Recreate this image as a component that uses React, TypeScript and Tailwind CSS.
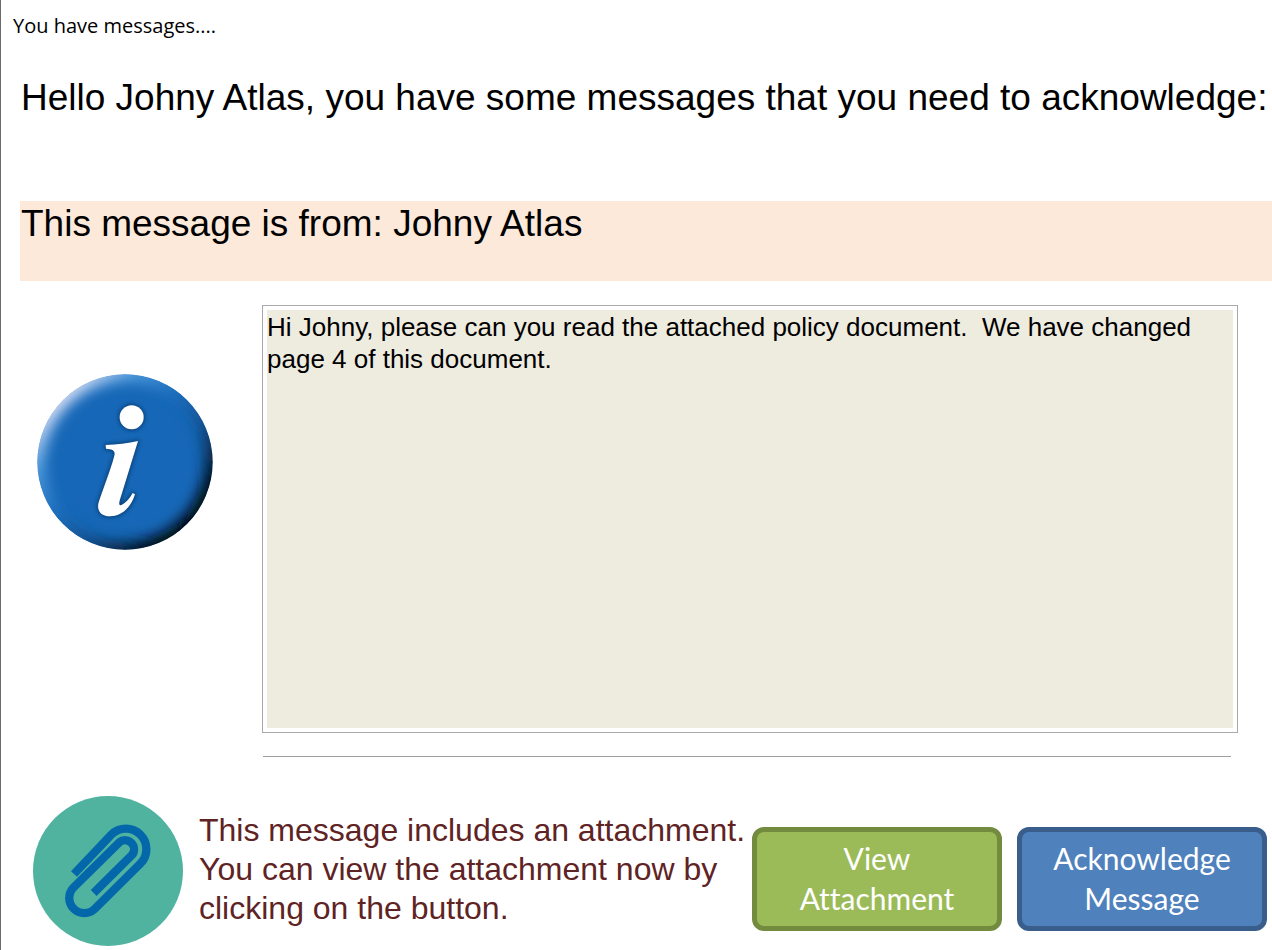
import React from 'react';

const InfoIcon: React.FC = () => (
  <svg viewBox="51 41 528 528" className="size-44 shrink-0" role="img" aria-label="Information">
    <defs>
      <clipPath id="disc">
        <circle cx="315" cy="305" r="263" />
      </clipPath>
      <linearGradient id="bevel" x1="0.12" y1="0.12" x2="0.88" y2="0.88">
        <stop offset="0" stopColor="#eeeafa" />
        <stop offset="0.2" stopColor="#4f9bdc" />
        <stop offset="0.42" stopColor="#1d70c0" />
        <stop offset="0.65" stopColor="#12508e" />
        <stop offset="0.88" stopColor="#03101d" />
        <stop offset="1" stopColor="#000000" />
      </linearGradient>
      <filter id="soft" x="-20%" y="-20%" width="140%" height="140%">
        <feGaussianBlur stdDeviation="19" />
      </filter>
      <filter id="glow" x="-40%" y="-30%" width="180%" height="160%">
        <feGaussianBlur stdDeviation="6" />
      </filter>
      <g id="mark">
        <circle cx="335" cy="171" r="36" />
        <path d="M354 242 C325 249 290 253 257 254 L258 265 C278 266 287 271 283 286 C270 335 249 385 236 426 C229 452 244 468 270 468 C306 467 334 440 345 402 L338 398 C328 416 312 434 300 435 C295 433 299 420 303 408 Z" />
      </g>
    </defs>
    <g clipPath="url(#disc)">
      <circle cx="315" cy="305" r="263" fill="#1667b7" />
      <circle cx="315" cy="305" r="268" fill="none" stroke="url(#bevel)" strokeWidth="58" filter="url(#soft)" />
    </g>
    <use href="#mark" fill="#0b3c70" stroke="#0b3c70" strokeWidth="6" filter="url(#glow)" />
    <use href="#mark" fill="#ffffff" />
  </svg>
);

const PaperclipIcon: React.FC = () => (
  <svg viewBox="39 48 450 450" className="size-[150px] shrink-0" role="img" aria-label="Attachment">
    <circle cx="264" cy="273" r="225" fill="#50b3a0" />
    <path
      d="M162 282 L274 164 A61 61 0 0 1 361 251 L225 386 A45 45 0 0 1 161 322 L298 187 A27 27 0 0 1 336 225 L221 339"
      fill="none"
      stroke="#0467aa"
      strokeWidth="25"
    />
  </svg>
);

const ActionButton: React.FC<{ className: string; children: React.ReactNode }> = ({ className, children }) => (
  <button
    type="button"
    className={`h-[104px] w-[250px] shrink-0 rounded-xl border-[5px] px-6 pb-0.5 font-['Lato',sans-serif] text-[30px] leading-10 text-white [font-variant-ligatures:none] ${className}`}
  >
    {children}
  </button>
);

const App: React.FC = () => (
  <div className="min-h-screen border-l border-[#6b6b6b] bg-white font-['Liberation_Sans',sans-serif] text-black">
    <header className="px-3 pt-3 font-['Open_Sans',sans-serif] text-[20px] leading-7">You have messages....</header>

    <main className="pt-8 pl-[19px]">
      <h1 className="pt-px pl-px text-[37px] leading-[50px]">
        Hello Johny Atlas, you have some messages that you need to acknowledge:
      </h1>

      <h2 className="mt-[78px] h-20 bg-[#fde9da] pt-px pl-px text-[37px] leading-[44px]">
        This message is from: Johny Atlas
      </h2>

      <section className="mt-6 flex items-start gap-[49px] pr-[34px] pl-[17px]">
        <div className="pt-[69px]">
          <InfoIcon />
        </div>
        <div className="grow">
          <div className="border border-[#a9a9ac] p-1">
            <textarea
              readOnly
              aria-label="Message"
              className="block h-[418px] w-full resize-none bg-[#eeebdf] pt-px text-[26px] leading-8 outline-none"
              value="Hi Johny, please can you read the attached policy document.  We have changed page 4 of this document."
            />
          </div>
          <hr className="mt-[23px] mr-[7px] ml-px border-[#a0a0a0]" />
        </div>
      </section>

      <section className="mt-[39px] flex items-center pr-[5px] pl-[13px]">
        <PaperclipIcon />
        <p className="grow pb-1 pl-4 text-[32px] leading-[39px] whitespace-nowrap text-[#5f2324]">
          This message includes an attachment.
          <br />
          You can view the attachment now by
          <br />
          clicking on the button.
        </p>
        <div className="flex gap-[15px] pt-4">
          <ActionButton className="border-[#728b3f] bg-[#9bbb58]">
            View
            <br />
            Attachment
          </ActionButton>
          <ActionButton className="border-[#395e8b] bg-[#4f81bd]">
            Acknowledge
            <br />
            Message
          </ActionButton>
        </div>
      </section>
    </main>
  </div>
);

export default App;
